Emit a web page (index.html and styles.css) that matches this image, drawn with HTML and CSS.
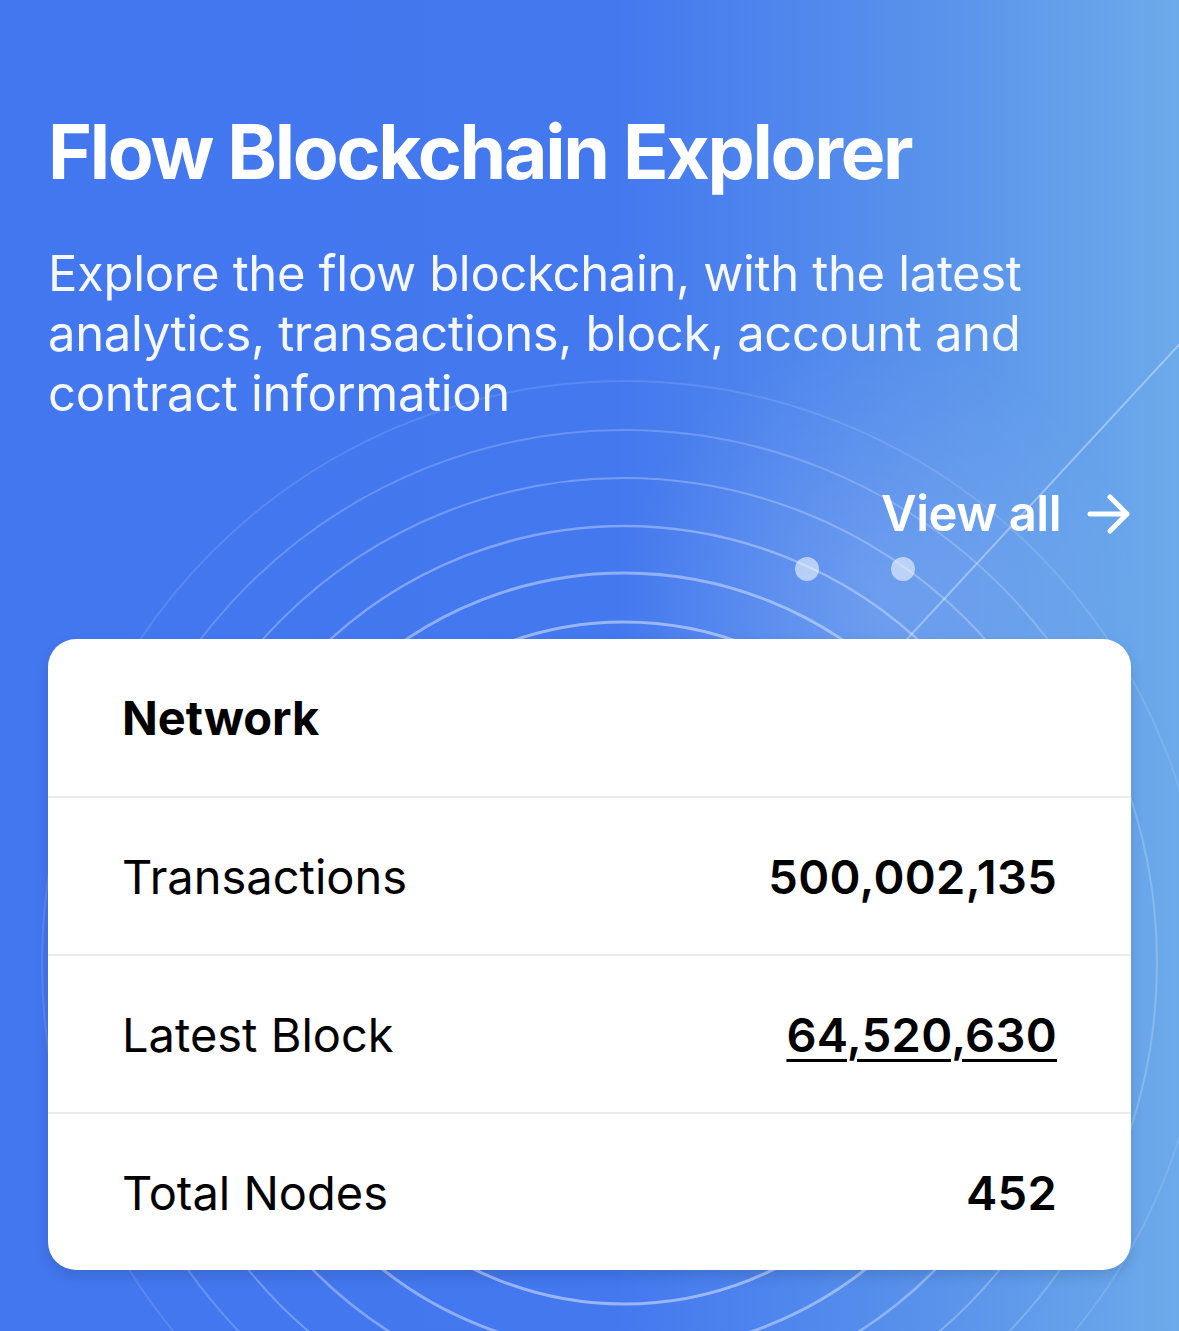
FILE: index.html
```html
<!DOCTYPE html>
<html lang="en">

<head>
  <meta charset="UTF-8">
  <meta name="viewport" content="width=device-width, initial-scale=1.0">
  <title>Flow Blockchain Explorer</title>
  <link rel="stylesheet" href="styles.css">
</head>

<body>
  <section class="hero">
    <!-- background rings -->
    <svg class="rings" width="1179" height="1331" viewBox="0 0 1179 1331">
      <g fill="none" stroke="#fff">
        <circle cx="624" cy="963" r="341" stroke-width="3" stroke-opacity="0.45" />
        <circle cx="624" cy="963" r="390" stroke-width="3" stroke-opacity="0.4" />
        <circle cx="624" cy="963" r="437" stroke-width="2.5" stroke-opacity="0.33" />
        <circle cx="624" cy="963" r="485" stroke-width="2" stroke-opacity="0.26" />
        <circle cx="624" cy="963" r="533" stroke-width="2" stroke-opacity="0.2" />
        <circle cx="624" cy="963" r="582" stroke-width="2" stroke-opacity="0.12" />
        <line x1="1200" y1="322" x2="860" y2="690" stroke-width="2" stroke-opacity="0.35" />
      </g>
    </svg>

    <div class="hero-inner">
      <h1 class="title">Flow Blockchain Explorer</h1>
      <p class="subtitle">Explore the flow blockchain, with the latest analytics, transactions, block, account and contract information</p>

      <div class="view-all-row">
        <a class="view-all" href="#">View all
          <svg width="44" height="40" viewBox="0 0 44 40">
            <path d="M3 20 H40 M23 3 L40 20 L23 37" fill="none" stroke="#fff" stroke-width="5" stroke-linecap="round" stroke-linejoin="round" />
          </svg>
        </a>
      </div>

      <div class="dots">
        <span class="dot"></span>
        <span class="dot"></span>
      </div>

      <div class="card">
        <div class="card-row card-head">Network</div>
        <div class="card-row">
          <span class="label">Transactions</span>
          <span class="value">500,002,135</span>
        </div>
        <div class="card-row">
          <span class="label">Latest Block</span>
          <a class="value link" href="#">64,520,630</a>
        </div>
        <div class="card-row">
          <span class="label">Total Nodes</span>
          <span class="value">452</span>
        </div>
      </div>
    </div>
  </section>
</body>

</html>
```

FILE: styles.css
```css
body {
  font-family: Inter, "Noto Sans", Arial, sans-serif;
  margin: 0;
  padding: 0;
  background-color: #4377ef;
}

.hero {
  position: relative;
  width: 1179px;
  height: 1331px;
  overflow: hidden;
  background:
    radial-gradient(circle at 880px 600px, rgba(255, 255, 255, 0.14) 0, rgba(255, 255, 255, 0) 260px),
    linear-gradient(90deg, #4377ef 0%, #4478ef 52%, #5a93eb 80%, #6caaea 100%);
}

.rings {
  position: absolute;
  top: 0;
  left: 0;
}

.hero-inner {
  position: relative;
  padding: 106px 48px 0;
  display: flex;
  flex-direction: column;
}

.title {
  margin: 0;
  color: #fff;
  font-size: 75px;
  line-height: 91px;
  font-weight: 650;
  letter-spacing: -2.3px;
}

.subtitle {
  margin: 47px 0 0;
  color: rgba(255, 255, 255, 0.94);
  font-size: 49px;
  line-height: 60px;
  font-weight: 400;
  letter-spacing: -0.35px;
}

.view-all-row {
  display: flex;
  justify-content: flex-end;
  margin-top: 60px;
}

.view-all {
  display: flex;
  align-items: center;
  gap: 26px;
  color: #fff;
  text-decoration: none;
  font-size: 49px;
  line-height: 60px;
  font-weight: 600;
  letter-spacing: -0.5px;
}

.dots {
  display: flex;
  justify-content: flex-end;
  gap: 72px;
  margin-top: 13px;
  padding-right: 216px;
}

.dot {
  width: 24px;
  height: 24px;
  border-radius: 50%;
  background-color: rgba(255, 255, 255, 0.55);
}

.card {
  margin-top: 58px;
  background-color: #fff;
  border-radius: 28px;
  box-shadow: 0 6px 14px rgba(0, 0, 0, 0.12);
  display: flex;
  flex-direction: column;
}

.card-row {
  box-sizing: border-box;
  height: 158px;
  padding: 0 74px;
  display: flex;
  align-items: center;
  justify-content: space-between;
  border-top: 2px solid #ebebeb;
  font-size: 47px;
  color: #000;
}

.card-head {
  height: 157px;
  border-top: none;
  font-weight: 700;
}

.label {
  font-weight: 400;
}

.value {
  font-weight: 600;
  letter-spacing: 0.3px;
}

.link {
  color: #000;
  text-decoration: underline;
  text-decoration-thickness: 3px;
  text-underline-offset: 7px;
}
```
